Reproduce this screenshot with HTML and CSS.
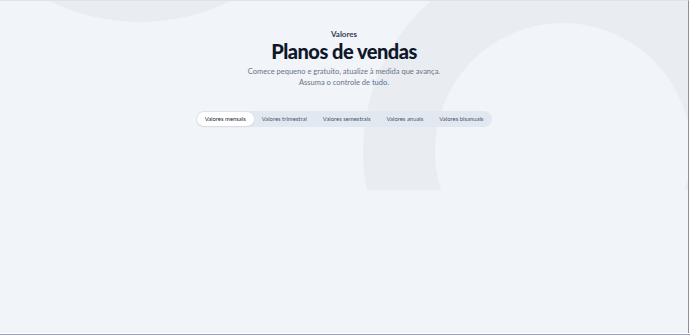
FILE: index.html
```html
<!DOCTYPE html>
<html lang="pt">
<head>
<meta charset="utf-8">
<title>Planos de vendas</title>
<link rel="stylesheet" href="styles.css">
</head>
<body>
<div class="frame">
  <div class="page">
    <section class="hero">
      <div class="deco deco-circle"></div>
      <div class="deco deco-ring"></div>
      <div class="hero-content">
        <p class="eyebrow">Valores</p>
        <h1 class="title">Planos de vendas</h1>
        <p class="subtitle">Comece pequeno e gratuito, atualize à medida que avança.<br>Assuma o controle de <span class="accent">tudo</span>.</p>
        <nav class="tabs">
          <button class="tab tab-active">Valores mensais</button>
          <button class="tab">Valores trimestral</button>
          <button class="tab">Valores semestrais</button>
          <button class="tab">Valores anuais</button>
          <button class="tab">Valores bisanuais</button>
        </nav>
      </div>
    </section>
  </div>
</div>
</body>
</html>
```

FILE: styles.css
```css
html, body {
  margin: 0;
  padding: 0;
}
body {
  width: 690px;
  height: 335px;
  overflow: hidden;
  background: #ffffff;
  font-family: "Lato", "Inter", sans-serif;
}
.frame {
  height: 335px;
  box-sizing: border-box;
  border-bottom: 1px solid #8fa3bf;
}
.page {
  width: 689px;
  height: 333px;
  box-sizing: border-box;
  border-top: 1px solid #dfe3e8;
  border-right: 1px solid #8a9099;
  background: #f1f4f8;
  overflow: hidden;
}
.hero {
  position: relative;
  height: 189px;
  overflow: hidden;
}
.deco {
  position: absolute;
  border-radius: 50%;
  pointer-events: none;
}
.deco-circle {
  left: -65px;
  top: -389px;
  width: 410px;
  height: 410px;
  background: #e9edf2;
}
.deco-ring {
  left: 363px;
  top: -50px;
  width: 400px;
  height: 400px;
  box-sizing: border-box;
  border: 72px solid #e9edf2;
}
.hero-content {
  position: relative;
  display: flex;
  flex-direction: column;
  align-items: center;
  padding-top: 28px;
}
.eyebrow {
  margin: 0;
  font-size: 8px;
  line-height: 10px;
  font-weight: 700;
  color: #334155;
}
.title {
  margin: 1px 0 0;
  font-size: 20px;
  line-height: 22px;
  font-weight: 900;
  letter-spacing: -0.5px;
  color: #0f172a;
}
.subtitle {
  margin: 4px 0 0;
  font-size: 7.5px;
  line-height: 11px;
  color: #687386;
  text-align: center;
}
.accent {
  color: #4f6f9c;
}
.tabs {
  margin-top: 23px;
  display: flex;
  padding: 1px;
  border-radius: 9px;
  background: #e2e8f0;
}
.tab {
  border: 0;
  margin: 0;
  background: transparent;
  font-family: inherit;
  font-size: 5.9px;
  line-height: 14px;
  height: 14px;
  padding: 0 8px;
  border-radius: 8px;
  color: #475569;
  cursor: pointer;
}
.tab-active {
  background: #ffffff;
  color: #1e293b;
  box-shadow: 0 0 0 0.5px #d9dee5, 0 1px 2px rgba(15, 23, 42, 0.08);
}
```
